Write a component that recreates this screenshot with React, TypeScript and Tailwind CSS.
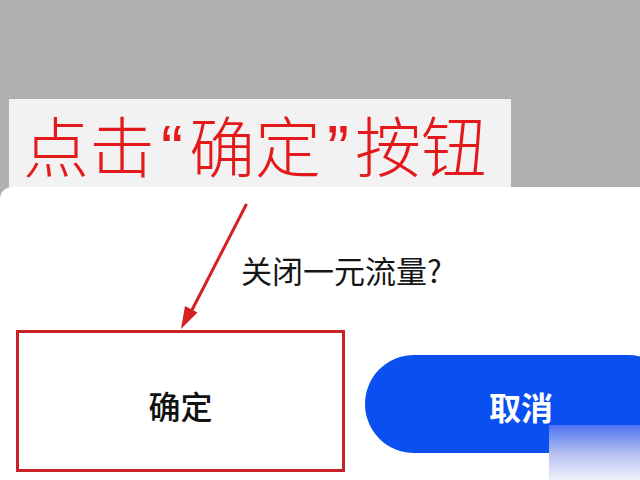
export default function App() {
  return (
    <div
      className="relative w-[640px] h-[480px] overflow-hidden bg-[#b0b0b0] flex flex-col"
      style={{ fontFamily: '"Noto Sans CJK SC", "Noto Sans", sans-serif' }}
    >
      {/* Annotation label */}
      <div className="pt-[99px] pl-[9px]">
        <div className="h-[88px] w-[502px] bg-[#f2f2f2] flex items-center pl-[14px] pt-[6px]">
          <span className="text-[66px] leading-none font-light text-[#e3191c] whitespace-nowrap">
            点击<span className="font-['Liberation_Sans'] mx-[6px]">“</span>确定
            <span className="font-['Liberation_Sans'] mx-[6px]">”</span>按钮
          </span>
        </div>
      </div>

      {/* Bottom sheet */}
      <div className="flex-1 bg-white rounded-tl-[12px]">
        <p className="mt-[67px] pl-[241px] text-[31px] leading-none text-[#151515]">关闭一元流量?</p>
        <div className="mt-[45px] pl-[16px] flex items-start">
          <div className="w-[329px] h-[142px] shrink-0 border-[3px] border-[#c92226] flex items-center justify-center pt-[8px]">
            <span className="text-[32px] leading-none font-medium text-[#111]">确定</span>
          </div>
          <button className="ml-[20px] mt-[25px] h-[98px] w-[312px] shrink-0 rounded-full bg-[#0a4ff0] flex items-center justify-center pt-[4px]">
            <span className="text-[32px] leading-none font-bold text-white">取消</span>
          </button>
        </div>
      </div>

      {/* Arrow */}
      <svg className="absolute left-0 top-0 pointer-events-none" width="640" height="480" viewBox="0 0 640 480">
        <line x1="246" y1="205" x2="192" y2="310" stroke="#d42020" strokeWidth="3" strokeLinecap="round" />
        <polygon points="181,329 197.5,312.5 185,306" fill="#d42020" />
      </svg>

      {/* Watermark */}
      <div className="absolute left-[549px] top-[425px] w-[91px] h-[55px] bg-gradient-to-b from-[#4d70f0] via-[#b4bef0] to-[#eef0fa]" />
    </div>
  );
}
